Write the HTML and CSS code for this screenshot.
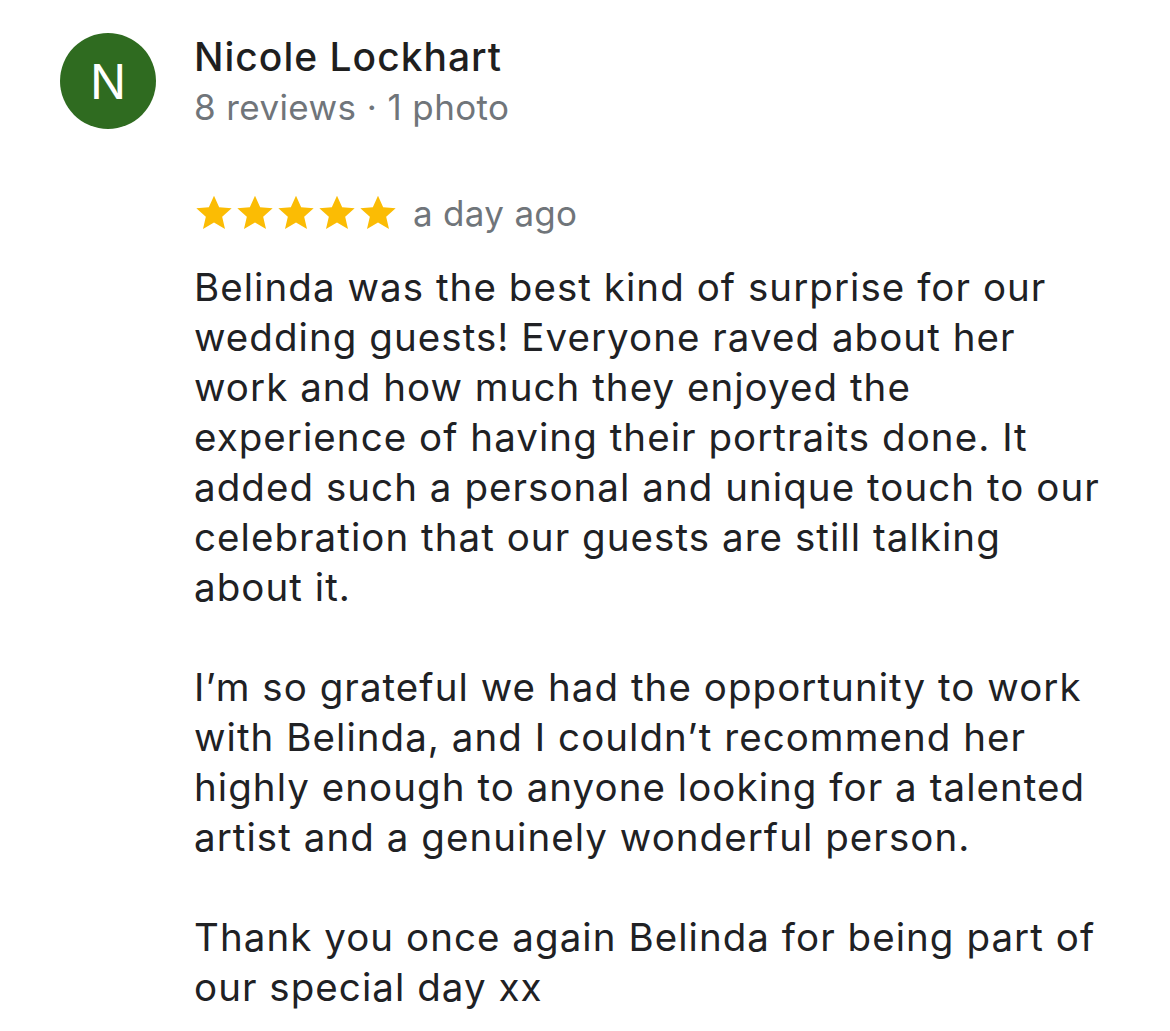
FILE: index.html
```html
<!DOCTYPE html>
<html>
<head>
<meta charset="utf-8">
<link rel="stylesheet" href="styles.css">
</head>
<body>
<div class="review">
  <div class="avatar">N</div>
  <div class="content">
    <div class="name">Nicole Lockhart</div>
    <div class="meta">8 reviews · 1 photo</div>
    <div class="rating">
      <div class="stars">
        <svg viewBox="0 0 24 24" class="star"><path d="M12 1.6l3.1 6.9 7.5.7-5.7 5 1.7 7.4L12 17.7l-6.6 3.9 1.7-7.4-5.7-5 7.5-.7z"/></svg>
        <svg viewBox="0 0 24 24" class="star"><path d="M12 1.6l3.1 6.9 7.5.7-5.7 5 1.7 7.4L12 17.7l-6.6 3.9 1.7-7.4-5.7-5 7.5-.7z"/></svg>
        <svg viewBox="0 0 24 24" class="star"><path d="M12 1.6l3.1 6.9 7.5.7-5.7 5 1.7 7.4L12 17.7l-6.6 3.9 1.7-7.4-5.7-5 7.5-.7z"/></svg>
        <svg viewBox="0 0 24 24" class="star"><path d="M12 1.6l3.1 6.9 7.5.7-5.7 5 1.7 7.4L12 17.7l-6.6 3.9 1.7-7.4-5.7-5 7.5-.7z"/></svg>
        <svg viewBox="0 0 24 24" class="star"><path d="M12 1.6l3.1 6.9 7.5.7-5.7 5 1.7 7.4L12 17.7l-6.6 3.9 1.7-7.4-5.7-5 7.5-.7z"/></svg>
      </div>
      <span class="date">a day ago</span>
    </div>
    <div class="body">
      <p>Belinda was the best kind of surprise for our<br>wedding guests! Everyone raved about her<br>work and how much they enjoyed the<br>experience of having their portraits done. It<br>added such a personal and unique touch to our<br>celebration that our guests are still talking<br>about it.</p>
      <p>I’m so grateful we had the opportunity to work<br>with Belinda, and I couldn’t recommend her<br>highly enough to anyone looking for a talented<br>artist and a genuinely wonderful person.</p>
      <p>Thank you once again Belinda for being part of<br>our special day xx</p>
    </div>
  </div>
</div>
</body>
</html>
```
FILE: styles.css
```css
html, body {
  margin: 0;
  padding: 0;
  background: #ffffff;
}
body {
  font-family: Inter, "Noto Sans", "Liberation Sans", sans-serif;
  color: #202124;
}
.review {
  display: flex;
  align-items: flex-start;
  gap: 38px;
  padding: 33px 0 0 60px;
}
.avatar {
  flex: none;
  width: 96px;
  height: 96px;
  border-radius: 50%;
  background: #2f6b20;
  color: #ffffff;
  font-size: 48px;
  font-weight: 400;
  display: flex;
  align-items: center;
  justify-content: center;
}
.content {
  display: flex;
  flex-direction: column;
  margin-top: -1px;
}
.name {
  font-size: 39px;
  font-weight: 500;
  line-height: 50px;
  letter-spacing: 1px;
  color: #1f1f1f;
}
.meta {
  font-size: 35px;
  line-height: 50px;
  letter-spacing: 0.4px;
  color: #70757a;
}
.rating {
  display: flex;
  align-items: center;
  gap: 15px;
  margin-top: 56px;
  height: 50px;
}
.stars {
  display: flex;
  gap: 1px;
}
.star {
  width: 40px;
  height: 40px;
  fill: #fbbc04;
}
.date {
  font-size: 35px;
  letter-spacing: 0.3px;
  color: #70757a;
}
.body {
  margin-top: 24px;
  font-size: 38.5px;
  line-height: 50px;
  letter-spacing: 1.05px;
  white-space: nowrap;
}
.body p {
  margin: 0 0 50px 0;
}
```
